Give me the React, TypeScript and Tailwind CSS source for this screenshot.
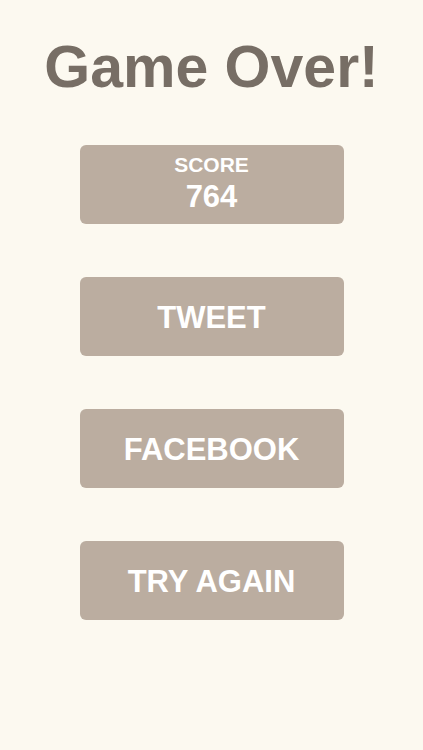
import React from 'react';

const font = { fontFamily: '"Liberation Sans", Arial, sans-serif' };

const Button = ({ label }: { label: string }) => (
  <button className="w-[264px] h-[79px] pt-[4px] rounded-[6px] bg-[#bbada0] text-white text-[31px] font-bold flex items-center justify-center">
    {label}
  </button>
);

export default function App() {
  return (
    <div className="w-[423px] h-[750px] bg-[#fcf9f0] flex flex-col items-center" style={font}>
      <h1 className="mt-[33px] text-[59px] leading-[68px] font-bold text-[#776e65]">Game Over!</h1>
      <div className="mt-[44px] flex flex-col items-center gap-[53px]">
        <div className="w-[264px] h-[79px] rounded-[6px] bg-[#bbada0] text-white font-bold flex flex-col items-center justify-center">
          <span className="text-[21px] leading-[22px]">SCORE</span>
          <span className="text-[31px] leading-[36px] mt-[3px]">764</span>
        </div>
        <Button label="TWEET" />
        <Button label="FACEBOOK" />
        <Button label="TRY AGAIN" />
      </div>
    </div>
  );
}
